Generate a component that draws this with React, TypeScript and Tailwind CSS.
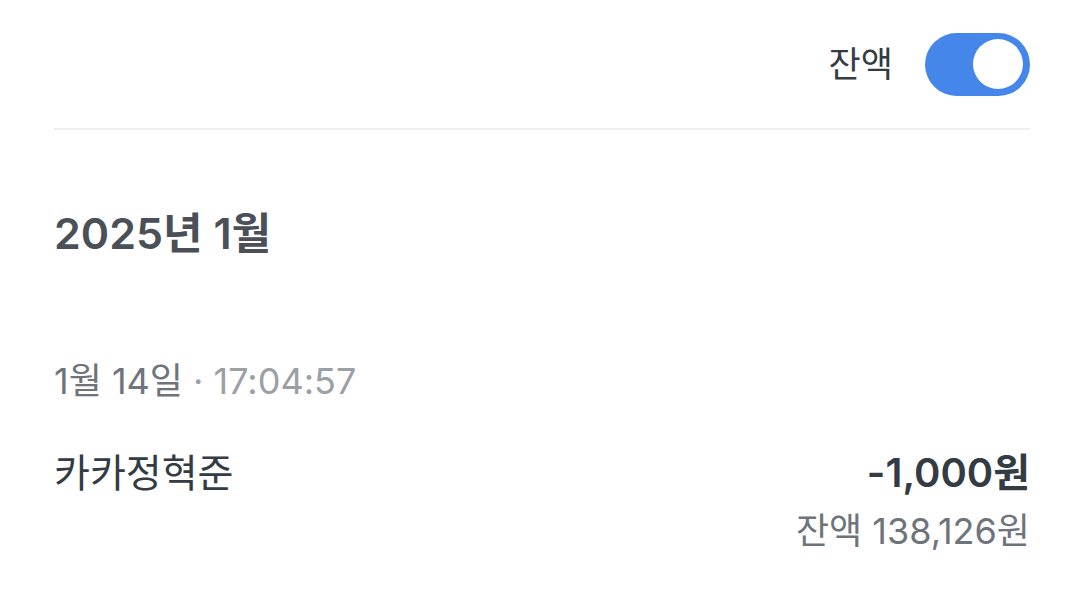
import React from 'react';

export default function App() {
  const font = { fontFamily: 'Inter, "Noto Sans CJK KR", sans-serif' };

  return (
    <div className="w-[1079px] h-[600px] bg-white overflow-hidden" style={font}>
      <div className="pl-[54px] pr-[49px]">
        {/* Header: balance toggle */}
        <div className="flex items-center justify-end gap-[32px] h-[130px] border-b-2 border-[#eceef0]">
          <span className="text-[35px] text-[#333b44]">잔액</span>
          <div className="w-[105px] h-[63px] rounded-full bg-[#4486ea] flex items-center justify-end pr-[7px]">
            <div className="w-[50px] h-[50px] rounded-full bg-white" />
          </div>
        </div>

        {/* Month */}
        <h2 className="mt-[75px] text-[43px] font-semibold text-[#4b5058] leading-[56px]">2025년 1월</h2>

        {/* Transaction */}
        <div className="mt-[96px]">
          <div className="text-[36px] leading-[48px] text-[#6e747c]">
            1월 14일 <span className="text-[#9ba0a7]">· 17:04:57</span>
          </div>
          <div className="mt-[42px] flex justify-between items-start">
            <span className="text-[39px] leading-[52px] text-[#333b44]">카카정혁준</span>
            <div className="flex flex-col items-end">
              <span className="text-[40px] leading-[52px] font-semibold text-[#333b44]">-1,000원</span>
              <span className="mt-[8px] text-[36px] leading-[48px] text-[#6e747c]">잔액 138,126원</span>
            </div>
          </div>
        </div>
      </div>
    </div>
  );
}
